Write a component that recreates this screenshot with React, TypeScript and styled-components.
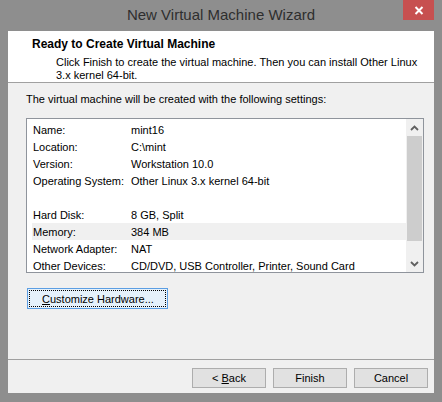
import React from "react";
import styled, { createGlobalStyle } from "styled-components";

const Global = createGlobalStyle`
  html, body { margin: 0; padding: 0; background: #8e8e8e; }
  body { font-family: "Liberation Sans", Arial, sans-serif; font-size: 11px; color: #000; }
  * { box-sizing: border-box; }
`;

const Window = styled.div`
  width: 442px;
  height: 402px;
  background: #8e8e8e;
  display: flex;
  flex-direction: column;
`;

const TitleBar = styled.div`
  height: 31px;
  display: flex;
  align-items: flex-start;
  padding: 0 8px;
`;

const Spacer = styled.div`
  width: 31px;
`;

const Title = styled.div`
  flex: 1;
  text-align: center;
  font-size: 15px;
  line-height: 30px;
  color: #2e2e2e;
`;

const CloseButton = styled.div`
  width: 31px;
  height: 20px;
  background: #c75050;
  display: flex;
  align-items: center;
  justify-content: center;
`;

const Client = styled.div`
  margin: 0 8px 9px 8px;
  flex: 1;
  background: #f0f0f0;
  display: flex;
  flex-direction: column;
`;

const Header = styled.div`
  height: 52px;
  flex: none;
  background: #fff;
  border-bottom: 1px solid #a0a0a0;
  padding: 6px 0 0 24px;
`;

const HeaderTitle = styled.div`
  font-weight: bold;
  font-size: 12px;
  line-height: 15px;
`;

const HeaderDesc = styled.div`
  padding-left: 24px;
  margin-top: 4px;
  line-height: 13px;
`;

const Body = styled.div`
  flex: 1;
  padding: 9px 10px 0 18px;
  display: flex;
  flex-direction: column;
`;

const Intro = styled.div`
  line-height: 15px;
  margin-bottom: 11px;
`;

const ListBox = styled.div`
  width: 398px;
  height: 155px;
  border: 1px solid #8f949c;
  background: #fff;
  display: flex;
  overflow: hidden;
`;

const Rows = styled.div`
  flex: 1;
  padding: 2px 0 0 5px;
`;

const Row = styled.div<{ $selected?: boolean }>`
  height: 17px;
  display: flex;
  align-items: center;
  padding-left: 1px;
  background: ${(p) => (p.$selected ? "#f0f0f0" : "transparent")};
`;

const Label = styled.span`
  width: 98px;
  white-space: nowrap;
`;

const Value = styled.span`
  white-space: nowrap;
`;

const ScrollBar = styled.div`
  width: 17px;
  background: #f0f0f0;
  display: flex;
  flex-direction: column;
`;

const Arrow = styled.div`
  height: 17px;
  display: flex;
  align-items: center;
  justify-content: center;
`;

const Track = styled.div`
  flex: 1;
  display: flex;
  flex-direction: column;
`;

const Thumb = styled.div`
  height: 105px;
  margin: 0 1px;
  background: #cdcdcd;
`;

const CustomizeButton = styled.div`
  margin-top: 15px;
  margin-left: 1px;
  width: 141px;
  height: 21px;
  border: 1px solid #5c9ee3;
  background: #e5f1fb;
  padding: 1px;
`;

const FocusRect = styled.div`
  height: 100%;
  border: 1px dotted #000;
  padding-left: 12px;
  display: flex;
  align-items: center;
`;

const Footer = styled.div`
  border-top: 1px solid #a0a0a0;
  padding: 8px 6px 5px 0;
  display: flex;
  justify-content: flex-end;
  gap: 7px;
`;

const Button = styled.div`
  width: 74px;
  height: 20px;
  border: 1px solid #adadad;
  background: #e1e1e1;
  display: flex;
  align-items: center;
  justify-content: center;
`;

const U = styled.span`
  text-decoration: underline;
`;

const Chevron = ({ up }: { up?: boolean }) => (
  <svg width="9" height="6" viewBox="0 0 9 6">
    <path
      d={up ? "M1 5 L4.5 1.5 L8 5" : "M1 1 L4.5 4.5 L8 1"}
      fill="none"
      stroke="#606060"
      strokeWidth="1.8"
    />
  </svg>
);

const rows: { label: string; value: string; selected?: boolean }[] = [
  { label: "Name:", value: "mint16" },
  { label: "Location:", value: "C:\\mint" },
  { label: "Version:", value: "Workstation 10.0" },
  { label: "Operating System:", value: "Other Linux 3.x kernel 64-bit" },
  { label: "", value: "" },
  { label: "Hard Disk:", value: "8 GB, Split" },
  { label: "Memory:", value: "384 MB", selected: true },
  { label: "Network Adapter:", value: "NAT" },
  { label: "Other Devices:", value: "CD/DVD, USB Controller, Printer, Sound Card" },
];

export default function App() {
  return (
    <>
      <Global />
      <Window>
        <TitleBar>
          <Spacer />
          <Title>New Virtual Machine Wizard</Title>
          <CloseButton>
            <svg width="10" height="9" viewBox="0 0 10 9">
              <path d="M1.5 1 L8.5 8 M8.5 1 L1.5 8" stroke="#fff" strokeWidth="2" />
            </svg>
          </CloseButton>
        </TitleBar>
        <Client>
          <Header>
            <HeaderTitle>Ready to Create Virtual Machine</HeaderTitle>
            <HeaderDesc>
              Click Finish to create the virtual machine. Then you can install Other Linux
              <br />
              3.x kernel 64-bit.
            </HeaderDesc>
          </Header>
          <Body>
            <Intro>The virtual machine will be created with the following settings:</Intro>
            <ListBox>
              <Rows>
                {rows.map((r, i) => (
                  <Row key={i} $selected={r.selected}>
                    <Label>{r.label}</Label>
                    <Value>{r.value}</Value>
                  </Row>
                ))}
              </Rows>
              <ScrollBar>
                <Arrow>
                  <Chevron up />
                </Arrow>
                <Track>
                  <Thumb />
                </Track>
                <Arrow>
                  <Chevron />
                </Arrow>
              </ScrollBar>
            </ListBox>
            <CustomizeButton>
              <FocusRect>
                <span>
                  <U>C</U>ustomize Hardware...
                </span>
              </FocusRect>
            </CustomizeButton>
          </Body>
          <Footer>
            <Button>
              <span>
                &lt; <U>B</U>ack
              </span>
            </Button>
            <Button>Finish</Button>
            <Button>Cancel</Button>
          </Footer>
        </Client>
      </Window>
    </>
  );
}
